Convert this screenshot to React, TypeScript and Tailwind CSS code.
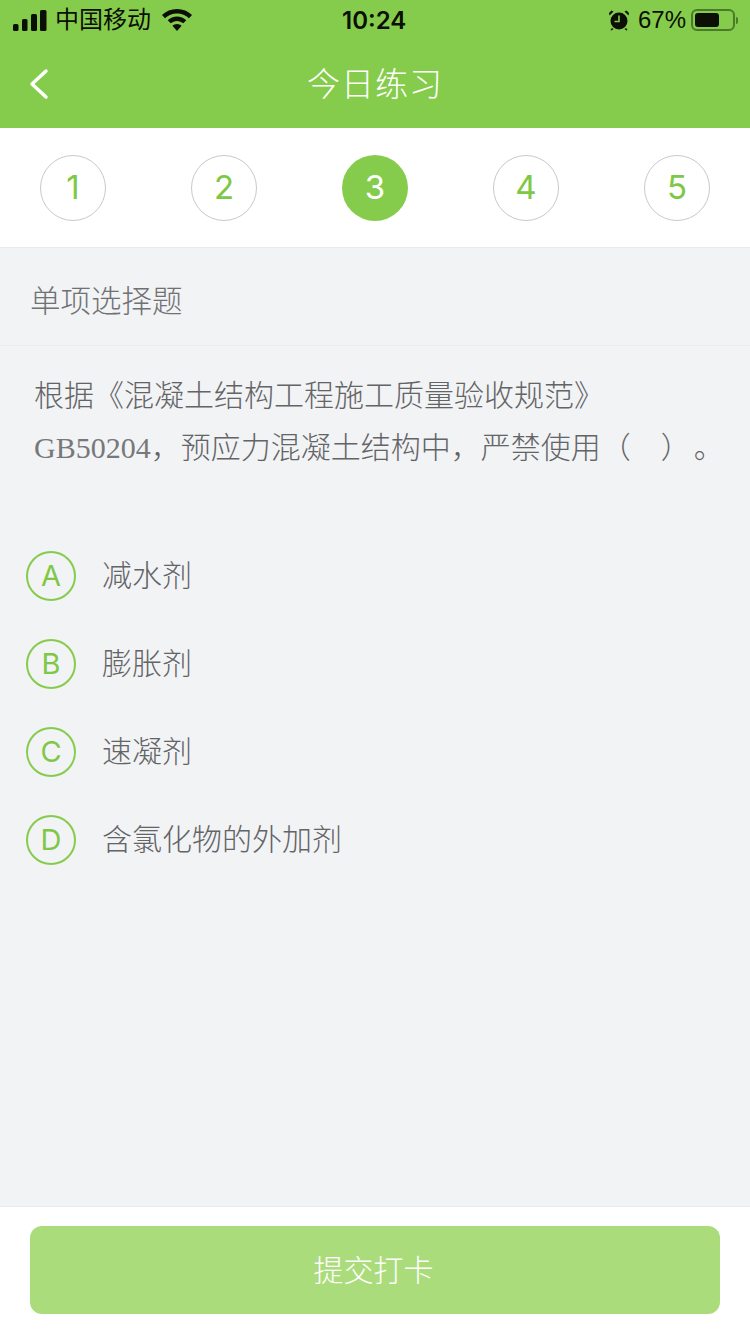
const CJK = '"Liberation Sans", "Noto Sans CJK SC", sans-serif';
const LATIN = { fontFamily: 'Inter, sans-serif' };

const steps = [1, 2, 3, 4, 5];
const active = 3;
const options = [
  { key: 'A', text: '减水剂' },
  { key: 'B', text: '膨胀剂' },
  { key: 'C', text: '速凝剂' },
  { key: 'D', text: '含氯化物的外加剂' },
];

function StatusBar() {
  return (
    <div className="h-10 relative flex items-center justify-between pl-[13px] pr-[12px] text-[#0b0f05]">
      <div className="flex items-center">
        <svg width="34" height="21" viewBox="0 0 34 21" fill="currentColor">
          <rect x="0" y="14" width="5.500" height="7" rx="1.500" />
          <rect x="9" y="9" width="5.500" height="12" rx="1.500" />
          <rect x="18" y="4" width="6" height="17" rx="1.500" />
          <rect x="27" y="0" width="6.500" height="21" rx="1.500" />
        </svg>
        <span className="ml-[8px] text-[24px] leading-none">中国移动</span>
        <svg className="ml-[11px]" width="30" height="22" viewBox="0 0 30 22" fill="currentColor">
          <path d="M15 0C9 0 4 2.300 0 6l3 3.200C6.200 6.300 10.300 4.500 15 4.500s8.800 1.800 12 4.700L30 6C26 2.300 21 0 15 0z" />
          <path d="M15 7.500c-3.600 0-6.900 1.400-9.300 3.700l3 3.100c1.700-1.500 3.900-2.400 6.300-2.400s4.600.9 6.300 2.400l3-3.100C21.900 8.900 18.600 7.500 15 7.500z" />
          <path d="M15 15c-1.800 0-3.400.7-4.600 1.800L15 22l4.600-5.200C18.400 15.700 16.800 15 15 15z" />
        </svg>
      </div>
      <span className="absolute left-[342px] top-[7px] text-[24px] leading-[28px] font-semibold" style={LATIN}>10:24</span>
      <div className="flex items-center">
        <svg width="22" height="22" viewBox="0 0 22 22" fill="currentColor">
          <circle cx="11" cy="12" r="8.500" />
          <path d="M1.500 6.500 5.500 2.500 3.500 1.500 1 4zM20.500 6.500 16.500 2.500 18.500 1.500 21 4zM4 19l-1.500 2 1 .5 2-1.500zM18 19l1.500 2-1 .5-2-1.500z" />
          <path d="M11 6.500V12.500H6.500" fill="none" stroke="#86cc4c" strokeWidth="1.600" />
        </svg>
        <span className="ml-[8px] text-[24px] leading-none">67%</span>
        <div className="ml-[5px] w-[44px] h-[22px] rounded-[6px] border-2 border-[#4c7a2c] p-[2px]">
          <div className="w-[24px] h-full rounded-[3px] bg-[#0b0f05]" />
        </div>
        <div className="ml-[1px] w-[2px] h-[7px] rounded-r bg-[#4c7a2c]" />
      </div>
    </div>
  );
}

export default function App() {
  return (
    <div className="w-[750px] h-[1334px] flex flex-col bg-[#f2f3f5] overflow-hidden [text-spacing-trim:space-all]" style={{ fontFamily: CJK }}>
      <div className="bg-[#86cc4c] h-[128px] shrink-0">
        <StatusBar />
        <div className="h-[88px] relative flex items-center justify-center">
          <svg className="absolute left-[29px] top-[28px]" width="20" height="32" viewBox="0 0 20 32" fill="none" stroke="#fff" strokeWidth="3.500" strokeLinecap="round" strokeLinejoin="round">
            <path d="M17 3 3 16l14 13" />
          </svg>
          <h1 className="text-[33px] leading-none text-white font-light tracking-[1px]">今日练习</h1>
        </div>
      </div>

      <div className="h-[120px] shrink-0 bg-white border-b border-[#e9eaec] flex items-center justify-between px-10 pt-[1px]" style={LATIN}>
        {steps.map((n) =>
          n === active ? (
            <div key={n} className="w-[66px] h-[66px] rounded-full bg-[#86cc4c] flex items-center justify-center text-[33px] text-white">{n}</div>
          ) : (
            <div key={n} className="w-[66px] h-[66px] rounded-full border border-[#c9c9c9] flex items-center justify-center text-[33px] text-[#7fc845]">{n}</div>
          )
        )}
      </div>

      <div className="h-[98px] shrink-0 border-b border-[#ebecee] pl-[30px] flex items-center pt-[10px] text-[30.500px] leading-none text-[#707173] font-light">单项选择题</div>

      <div className="pl-[34px] pt-[24px] text-[30px] leading-[52px] text-[#636466] font-light whitespace-nowrap">
        <p>根据《混凝土结构工程施工质量验收规范》</p>
        <p>
          <span className="text-[#77787a]" style={{ fontFamily: '"Liberation Serif", serif' }}>GB50204</span>，预应力混凝土结构中，严禁使用（&nbsp;&nbsp;&nbsp;<span className="ml-[5px]">）</span><span className="ml-[3px]">。</span>
        </p>
      </div>

      <div className="pl-[26px] pt-[77px] flex flex-col gap-[38px]">
        {options.map((o) => (
          <div key={o.key} className="flex items-center gap-[26px]">
            <div className="w-[50px] h-[50px] rounded-full border-2 border-[#86cc4c] flex items-center justify-center text-[29px] text-[#7fc845]" style={LATIN}>{o.key}</div>
            <span className="text-[30px] leading-none text-[#636466] font-light">{o.text}</span>
          </div>
        ))}
      </div>

      <div className="mt-auto h-[128px] shrink-0 bg-white border-t border-[#e9eaec] px-[30px] pt-[19px]">
        <button className="w-full h-[88px] rounded-[12px] bg-[#abdc7b] text-[30px] text-white font-light pr-[3px]">提交打卡</button>
      </div>
    </div>
  );
}
